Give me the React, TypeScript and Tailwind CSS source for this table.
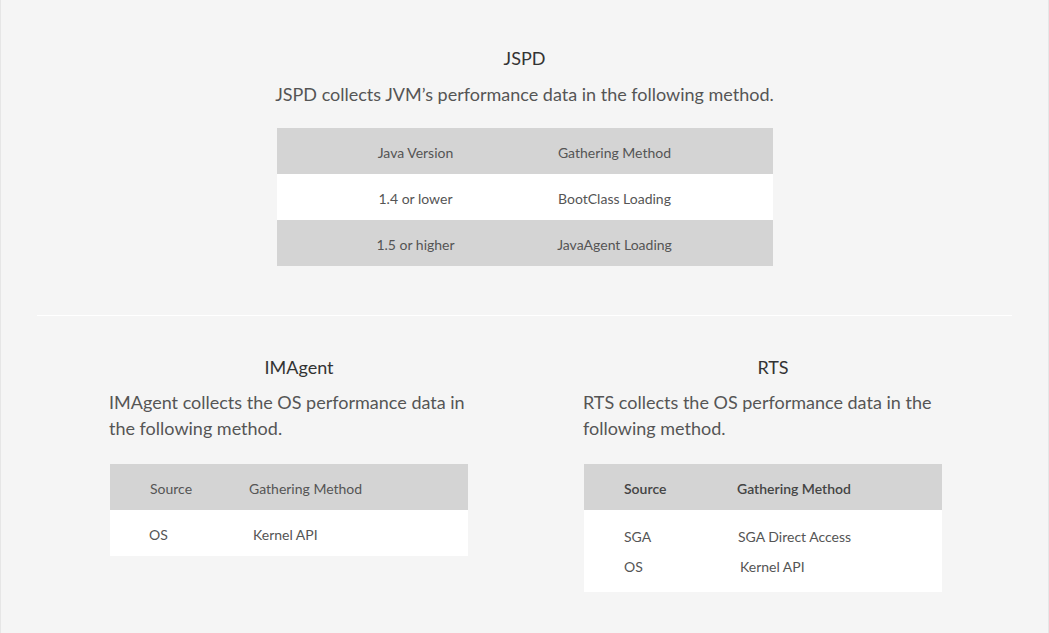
const font = { fontFamily: "Lato, 'Open Sans', sans-serif" };

function Section({
  title,
  desc,
  children,
}: {
  title: string;
  desc: string;
  children: React.ReactNode;
}) {
  return (
    <div className="w-[380px]">
      <h2 className="text-center text-[18px] leading-[26px] text-[#333]">{title}</h2>
      <p className="mt-[9px] text-[18px] leading-[26px] text-[#555]">{desc}</p>
      <div className="mt-[23px] w-[358px] ml-px">{children}</div>
    </div>
  );
}

export default function App() {
  return (
    <div
      className="h-[633px] w-full bg-[#f5f5f5] border-x border-[#e6e6e6] overflow-hidden"
      style={font}
    >
      {/* JSPD */}
      <div className="flex flex-col items-center pt-[45px]">
        <h1 className="text-[18px] leading-[26px] text-[#333]">JSPD</h1>
        <p className="mt-[10px] text-[18px] leading-[26px] text-[#555]">
          JSPD collects JVM’s performance data in the following method.
        </p>
        <div className="mt-[21px] w-[496px] text-[14px] text-[#555]">
          <div className="h-[46px] pt-[3px] bg-[#d4d4d4] grid grid-cols-[190px_150px] gap-[29px] pl-[44px] items-center text-center">
            <span>Java Version</span>
            <span>Gathering Method</span>
          </div>
          <div className="h-[46px] pt-[3px] bg-white grid grid-cols-[190px_150px] gap-[29px] pl-[44px] items-center text-center">
            <span>1.4 or lower</span>
            <span>BootClass Loading</span>
          </div>
          <div className="h-[46px] pt-[3px] bg-[#d4d4d4] grid grid-cols-[190px_150px] gap-[29px] pl-[44px] items-center text-center">
            <span>1.5 or higher</span>
            <span>JavaAgent Loading</span>
          </div>
        </div>
      </div>

      <div className="mx-[36px] mt-[49px] h-px bg-white" />

      <div className="flex gap-[94px] pl-[108px] mt-[38px]">
        <Section
          title="IMAgent"
          desc="IMAgent collects the OS performance data in the following method."
        >
          <div className="text-[14px] text-[#555]">
            <div className="h-[46px] pt-[3px] bg-[#d4d4d4] flex items-center pl-[40px]">
              <span className="w-[99px]">Source</span>
              <span>Gathering Method</span>
            </div>
            <div className="h-[46px] pt-[3px] bg-white flex items-center pl-[39px]">
              <span className="w-[104px]">OS</span>
              <span>Kernel API</span>
            </div>
          </div>
        </Section>
        <Section
          title="RTS"
          desc="RTS collects the OS performance data in the following method."
        >
          <div className="text-[14px] text-[#555]">
            <div className="h-[46px] pt-[3px] bg-[#d4d4d4] flex items-center pl-[40px] font-semibold text-[#444]">
              <span className="w-[113px]">Source</span>
              <span>Gathering Method</span>
            </div>
            <div className="bg-white pl-[40px] pt-[11px] pb-[11px]">
              <div className="h-[30px] flex items-center">
                <span className="w-[114px]">SGA</span>
                <span>SGA Direct Access</span>
              </div>
              <div className="h-[30px] flex items-center">
                <span className="w-[116px]">OS</span>
                <span>Kernel API</span>
              </div>
            </div>
          </div>
        </Section>
      </div>
    </div>
  );
}
